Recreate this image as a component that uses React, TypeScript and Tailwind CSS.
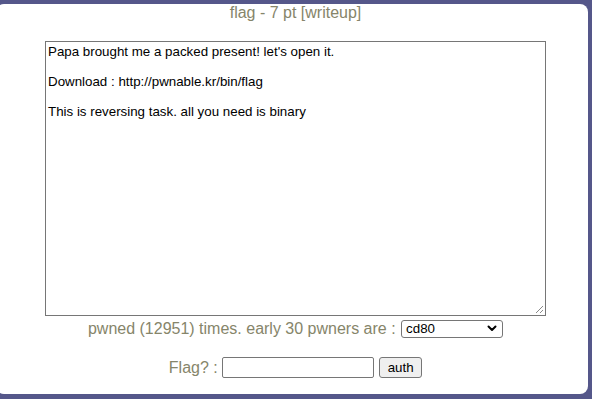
import React from "react";

export default function App() {
  return (
    <div className="w-[592px] h-[399px] bg-[#55578a] pt-[4px] pr-[4px] pb-[5px] overflow-hidden" style={{ fontFamily: '"Liberation Sans", Arial, sans-serif' }}>
      <div className="h-full -ml-[4px] pl-[7px] bg-white rounded-[8px] flex flex-col items-center">
        <div className="text-[16px] leading-[18px] text-[#86856a]">flag - 7 pt [writeup]</div>
        <div className="relative mt-[19px] w-[501px] h-[275px] border border-[#767676] px-[2px] py-[2px] text-[13.33px] leading-[15px] text-black whitespace-pre-wrap">
          {"Papa brought me a packed present! let's open it.\n\nDownload : http://pwnable.kr/bin/flag\n\nThis is reversing task. all you need is binary"}
          <svg className="absolute right-[1px] bottom-[1px]" width="9" height="9" viewBox="0 0 9 9">
            <line x1="1" y1="8" x2="8" y2="1" stroke="#8a8a8a" strokeWidth="1" />
            <line x1="5" y1="8" x2="8" y2="5" stroke="#8a8a8a" strokeWidth="1" />
          </svg>
        </div>
        <div className="mt-[3px] flex items-center h-[19px]">
          <span className="text-[16px] leading-[18px] text-[#86856a] whitespace-pre">pwned (12951) times. early 30 pwners are : </span>
          <div className="ml-[1px] w-[102px] h-[18px] border border-[#767676] rounded-[3px] bg-white flex items-center justify-between pl-[4px] pr-[5px]">
            <span className="text-[13.33px] leading-[15px] text-black">cd80</span>
            <svg width="10" height="7" viewBox="0 0 10 7">
              <path d="M1.5 1.5 L5 5 L8.5 1.5" fill="none" stroke="#000" strokeWidth="2" strokeLinecap="round" strokeLinejoin="round" />
            </svg>
          </div>
        </div>
        <div className="mt-[19px] flex items-center">
          <span className="text-[16px] leading-[18px] text-[#86856a] whitespace-pre">Flag? : </span>
          <div className="w-[152px] h-[21px] border border-[#767676] rounded-[2px] bg-white" />
          <div className="ml-[5px] w-[43px] h-[21px] border border-[#767676] rounded-[3px] bg-[#efefef] flex items-center justify-center text-[13.33px] leading-[15px] text-black">auth</div>
        </div>
      </div>
    </div>
  );
}
